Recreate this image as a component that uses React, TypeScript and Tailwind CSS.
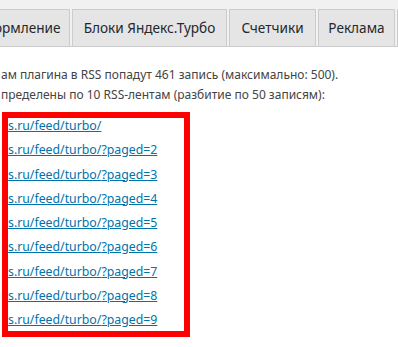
import React from 'react';

const tabs = [
  { label: 'Оформление', cls: 'ml-[-36px] w-[106px]' },
  { label: 'Блоки Яндекс.Турбо', cls: 'w-[155px]' },
  { label: 'Счетчики', cls: 'w-[87px]' },
  { label: 'Реклама', cls: 'w-[77px]' },
  { label: 'Доступ', cls: 'w-[70px]' },
];

const pages = ['', '?paged=2', '?paged=3', '?paged=4', '?paged=5', '?paged=6', '?paged=7', '?paged=8', '?paged=9'];

export default function App() {
  return (
    <div className="w-[398px] h-[347px] overflow-hidden bg-white font-['Noto_Sans',sans-serif] text-[#444]">
      <div className="bg-[#f1f1f1] pt-[9px] border-b border-[#ccc] h-[47px]">
        <div className="flex gap-[2px] whitespace-nowrap">
          {tabs.map((t) => (
            <div
              key={t.label}
              className={`${t.cls} shrink-0 h-[37px] flex items-center justify-center border border-b-0 border-[#ccc] bg-[#e5e5e5] text-[13.6px] text-[#23282d]`}
            >
              {t.label}
            </div>
          ))}
        </div>
      </div>

      <div className="pt-[18px] text-[12px] leading-[20px] whitespace-nowrap pl-[1px]">
        <p>ам плагина в RSS попадут 461 запись (максимально: 500).</p>
        <p>пределены по 10 RSS-лентам (разбитие по 50 записям):</p>
      </div>

      <div className="relative mt-[9px]">
        <div className="text-[12.3px] leading-[24.25px] pl-[8px]">
          {pages.map((p) => (
            <div key={p}>
              <a href="#" className="text-[#0073aa] underline">s.ru/feed/turbo/{p}</a>
            </div>
          ))}
        </div>
        <div className="absolute left-[2px] top-[-2px] w-[188px] h-[225px] border-[6px] border-[#ff0000]" />
      </div>
    </div>
  );
}
